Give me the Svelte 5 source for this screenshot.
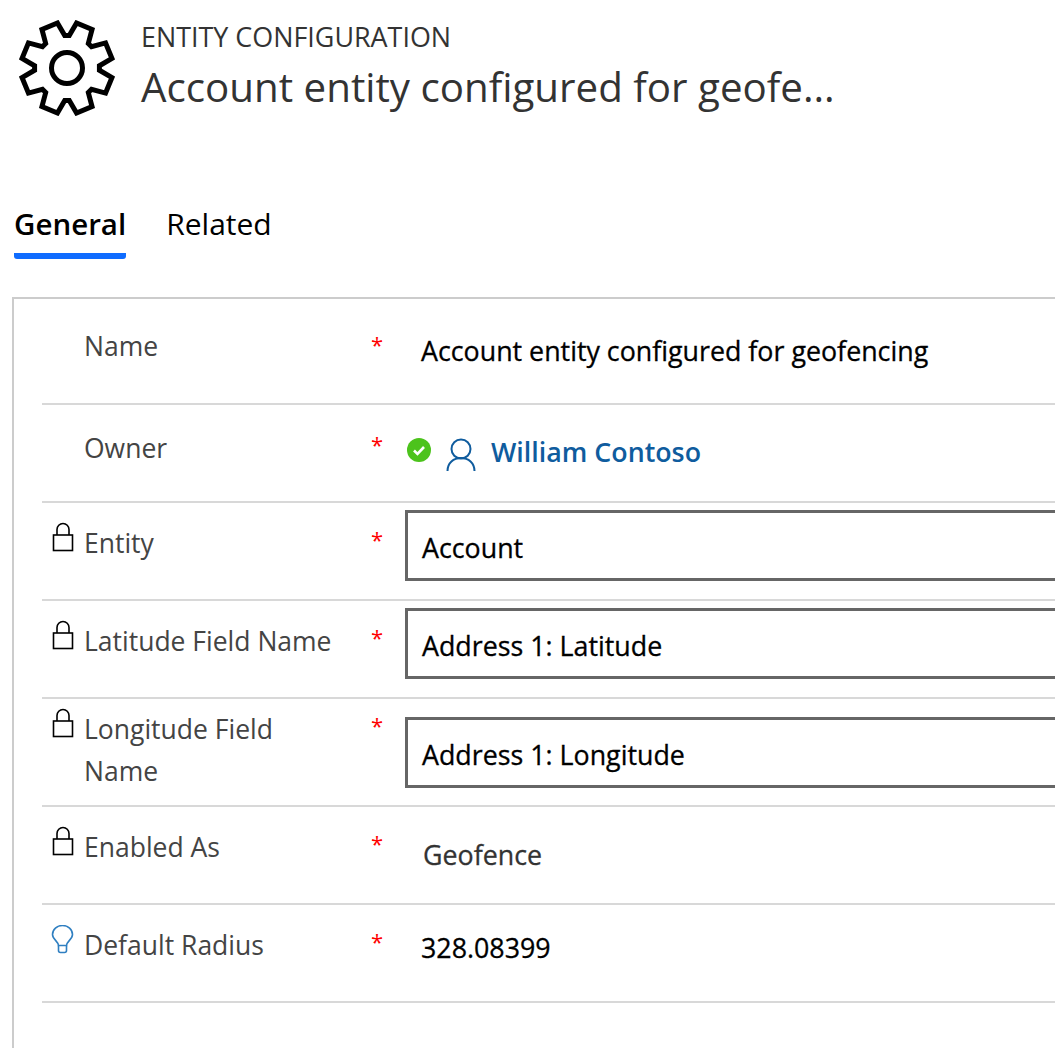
<script>
  const rows = [
    { label: 'Name', value: 'Account entity configured for geofencing', kind: 'plain', h: 106, pad: 26, star: 24, top: 34 },
    { label: 'Owner', value: 'William Contoso', kind: 'owner', h: 98, pad: 22, star: 18, top: 27 },
    { label: 'Entity', value: 'Account', kind: 'field', icon: 'lock', h: 98, pad: 19, star: 15, top: 7 },
    { label: 'Latitude Field Name', value: 'Address 1: Latitude', kind: 'field', icon: 'lock', h: 98, pad: 19, star: 15, top: 7 },
    { label: 'Longitude Field Name', value: 'Address 1: Longitude', kind: 'field', icon: 'lock', h: 108, pad: 9, star: 5, top: 18 },
    { label: 'Enabled As', value: 'Geofence', kind: 'muted', icon: 'lock', h: 98, pad: 19, star: 15, top: 30 },
    { label: 'Default Radius', value: '328.08399', kind: 'plain', icon: 'bulb', h: 98, pad: 19, star: 15, top: 25 }
  ];

  // gear outline: 8 teeth, short flat valleys on the 45 degree marks
  function gearPath() {
    const pts = [];
    for (let k = 0; k < 8; k++) {
      const mid = 22.5 + k * 45;
      for (const [a, r] of [[mid - 26.5, 32.5], [mid - 18.5, 32.5], [mid - 10.5, 46], [mid + 10.5, 46]]) {
        const t = ((a - 90) * Math.PI) / 180;
        pts.push((48 + r * Math.cos(t)).toFixed(2) + ' ' + (48 + r * Math.sin(t)).toFixed(2));
      }
    }
    return 'M' + pts.join('L') + 'Z';
  }
</script>

<div class="page">
  <header class="head">
    <svg class="gear" width="96" height="96" viewBox="0 0 96 96" fill="none" stroke="#000" stroke-width="5">
      <path d={gearPath()} />
      <circle cx="48" cy="48" r="15.5" />
    </svg>
    <div class="titles">
      <div class="kicker">ENTITY CONFIGURATION</div>
      <div class="title">Account entity configured for geofe...</div>
    </div>
  </header>

  <nav class="tabs">
    <div class="tab active">General</div>
    <div class="tab">Related</div>
  </nav>

  <section class="panel">
    {#each rows as row}
      <div class="row" style="height: {row.h}px">
        <div class="slot" style="padding-top: {row.pad}px">
          {#if row.icon === 'lock'}
            <svg width="24" height="30" viewBox="0 0 24 30" fill="none" stroke="#000" stroke-width="1.6">
              <rect x="2.500" y="13" width="19" height="15.500" />
              <path d="M6 13V7.500a6 6 0 0 1 12 0V13" />
            </svg>
          {:else if row.icon === 'bulb'}
            <svg class="bulb" width="24" height="30" viewBox="0 0 24 30" fill="none" stroke="#2f7fc1" stroke-width="1.6">
              <path d="M7.500 20.500c0-4-6-6-6-11a10 9 0 0 1 20 0c0 5-6 7-6 11z" />
              <path d="M7.500 20.500v5a2 2 0 0 0 2 2h4a2 2 0 0 0 2-2v-5" />
            </svg>
          {/if}
        </div>
        <div class="label" style="padding-top: {row.pad}px">{row.label}</div>
        <div class="star" style="padding-top: {row.star}px">*</div>
        <div class="value" style="padding-top: {row.top}px">
          {#if row.kind === 'owner'}
            <div class="owner">
              <svg class="ok" width="24" height="24" viewBox="0 0 24 24">
                <circle cx="12" cy="12" r="12" fill="#4cc31c" />
                <path d="M7 12.500l3.500 3.500 6.500-7" fill="none" stroke="#fff" stroke-width="2.600" />
              </svg>
              <svg class="person" width="30" height="34" viewBox="0 0 30 34" fill="none" stroke="#0f5c9e" stroke-width="2">
                <circle cx="15" cy="11" r="9.500" />
                <path d="M1.500 33c0-8 6-13 13.500-13s13.500 5 13.500 13" />
              </svg>
              <span class="link">{row.value}</span>
            </div>
          {:else if row.kind === 'field'}
            <div class="field">{row.value}</div>
          {:else}
            <div class={row.kind}>{row.value}</div>
          {/if}
        </div>
      </div>
    {/each}
  </section>
</div>

<style>
  :global(body) {
    margin: 0;
    background: #fff;
    font-family: "Open Sans", "Noto Sans", sans-serif;
  }
  .page {
    width: 1055px;
    height: 1048px;
    overflow: hidden;
  }
  .head {
    display: flex;
    height: 135px;
    padding: 19px 0 0 19px;
    box-sizing: border-box;
  }
  .gear {
    margin-top: 1px;
  }
  .titles {
    margin-left: 26px;
    color: #333;
  }
  .kicker {
    font-size: 26.900px;
    line-height: 36px;
  }
  .title {
    font-size: 40.300px;
    line-height: 52px;
    margin-top: 6px;
  }
  .tabs {
    display: flex;
    gap: 40px;
    padding: 68px 0 0 14px;
    height: 162px;
    box-sizing: border-box;
  }
  .tab {
    font-size: 30px;
    line-height: 42px;
    color: #000;
    height: 56px;
    box-sizing: border-box;
    border-bottom: 6px solid transparent;
    border-radius: 3px;
  }
  .active {
    font-size: 29.500px;
    font-weight: 600;
    border-bottom-color: #0f6cff;
  }
  .panel {
    margin-left: 12px;
    height: 751px;
    box-sizing: border-box;
    border-left: 2px solid #ccc;
    border-top: 2px solid #ccc;
    padding-left: 28px;
  }
  .row {
    display: grid;
    grid-template-columns: 42px 288px 33px 1fr;
    box-sizing: border-box;
    border-bottom: 2px solid #d8d8d8;
    margin-right: -20px;
  }
  .slot {
    padding-left: 9px;
  }
  .bulb {
    margin-top: 1px;
  }
  .label {
    font-size: 26.500px;
    line-height: 42px;
    max-width: 250px;
    color: #444;
  }
  .star {
    color: #f00;
    font-size: 22px;
    line-height: 42px;
    margin-left: -1px;
  }
  .value {
    font-size: 26.800px;
    line-height: 36px;
    color: #000;
    -webkit-text-stroke: 0.3px currentColor;
  }
  .muted {
    color: #333;
    padding-left: 18px;
  }
  .plain {
    padding-left: 16px;
  }
  .owner {
    display: flex;
    align-items: center;
    padding-left: 2px;
  }
  .ok {
    margin-top: -5px;
  }
  .person {
    margin: 6px 15px 0 15px;
  }
  .link {
    color: #0f5c9e;
    font-size: 26.800px;
    font-weight: 600;
    -webkit-text-stroke: 0;
  }
  .field {
    height: 71px;
    box-sizing: border-box;
    border: 3px solid #666;
    padding: 17px 0 0 14px;
  }
</style>
